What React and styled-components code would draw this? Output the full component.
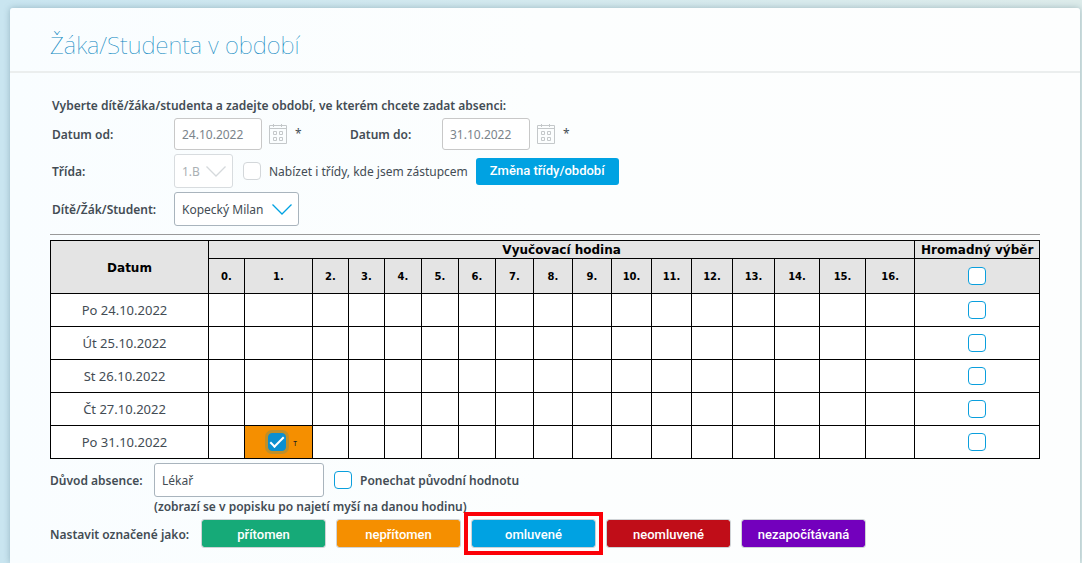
import React, { useState } from 'react';
import styled, { createGlobalStyle, css } from 'styled-components';

const textFont = "'Noto Sans', 'Open Sans', sans-serif";
const headFont = "'DejaVu Sans', Verdana, sans-serif";

const GlobalStyle = createGlobalStyle`
  *, *::before, *::after {
    box-sizing: border-box;
  }
  body {
    margin: 0;
    background: linear-gradient(90deg, #c9e5f0 0%, #d3e9ee 50%, #dcebea 100%);
    color: #434c54;
    font-family: ${textFont};
    font-size: 12px;
    line-height: 20px;
  }
  input, select, button {
    font: inherit;
    color: inherit;
  }
`;

const Page = styled.div`
  padding: 8px 2px 0 10px;
`;

const Card = styled.main`
  min-height: calc(100vh - 8px);
  border-radius: 3px 3px 0 0;
  background: linear-gradient(90deg, #f9fdff 0%, #fcfefe 50%, #fdfefe 100%);
  box-shadow: 0 0 6px rgba(70, 110, 125, 0.4);
`;

const CardHeader = styled.header`
  padding: 21px 40px 10px;
  border-bottom: 2px solid #ebeeee;
`;

const Title = styled.h1`
  margin: 0;
  color: #0a86c0;
  font-size: 24px;
  font-weight: 100;
  line-height: 32px;
`;

const Content = styled.div`
  padding: 22px 40px 12px;
`;

const Filter = styled.form`
  display: flex;
  flex-direction: column;
  gap: 4px;
  padding: 0 2px 8px;
  border-bottom: 1px solid #999;
  margin-bottom: 5px;
`;

const Intro = styled.p`
  margin: 0;
  padding-top: 2px;
  font-weight: 600;
  line-height: 17px;
`;

const Row = styled.div`
  display: flex;
  align-items: center;
`;

const Caption = styled.label`
  width: ${(props) => props.$width || 122}px;
  padding-top: 2px;
  font-weight: 600;
`;

const DateGroup = styled.div`
  display: flex;
  align-items: center;
  width: 298px;
`;

const TextInput = styled.input`
  width: ${(props) => props.$width || 88}px;
  height: ${(props) => props.$height || 32}px;
  padding: 0 7px;
  border: 1px solid ${(props) => (props.$muted ? '#c8c8c8' : '#a9b4bd')};
  border-radius: 3px;
  background: #fff;
  color: ${(props) => (props.$muted ? '#7b848b' : '#434c54')};
  outline: none;
`;

const IconButton = styled.button`
  display: flex;
  margin: 0 8px 0 7px;
  padding: 0;
  border: 0;
  background: none;
`;

const SelectBox = styled.div`
  display: grid;
  align-items: center;
  width: ${(props) => props.$width}px;
  height: 34px;
  border: 1px solid ${(props) => (props.$muted ? '#d8dcdf' : '#a9b4bd')};
  border-radius: 3px;
  background: #fff;
  color: ${(props) => (props.$muted ? '#aab0b4' : '#434c54')};

  select,
  svg {
    grid-area: 1 / 1;
  }
  select {
    appearance: none;
    width: 100%;
    height: 100%;
    padding: 2px 0 0 7px;
    border: 0;
    background: none;
    outline: none;
    opacity: 1;
  }
  svg {
    justify-self: end;
    margin-right: 5px;
    pointer-events: none;
    color: ${(props) => (props.$muted ? '#d5d9dc' : '#00a2e2')};
  }
`;

const checkMark = css`
  &::before {
    content: '';
    width: 14px;
    height: 7px;
    margin-top: -4px;
    border: solid #fff;
    border-width: 0 0 2px 2px;
    transform: rotate(-45deg);
  }
`;

const Check = styled.input.attrs({ type: 'checkbox' })`
  appearance: none;
  display: inline-grid;
  place-content: center;
  flex: none;
  width: 18px;
  height: 18px;
  margin: 0;
  border: 1px solid #0a9fdd;
  border-radius: 4px;
  background: #fff;
  vertical-align: middle;

  &:disabled {
    border-color: #d3d7da;
  }
  &:checked {
    border-color: #0a8fd0;
    background: #0a8fd0;
    ${checkMark}
  }
`;

const TableCheck = styled(Check)`
  display: grid;
  margin: 0 auto;
`;

const MarkCheck = styled(Check)`
  box-shadow: 0 0 0 3px rgba(110, 140, 100, 0.4);
`;

const CheckLabel = styled.label`
  display: flex;
  align-items: center;
  gap: 8px;
  margin: 0 8px 0 10px;
  font-weight: ${(props) => (props.$strong ? 600 : 400)};

  span {
    padding-top: 2px;
  }
`;

const Button = styled.button`
  height: 27px;
  padding: 0 14px;
  border: 0;
  border-radius: 3px;
  background: #00a2e2;
  color: #fff;
  font-family: Roboto, 'Liberation Sans', sans-serif;
  font-size: 13px;
  font-weight: 500;
`;

const StateButton = styled(Button)`
  width: 125px;
  height: 29px;
  padding: 2px 0 0;
  border: 1px solid #cfd3d6;
  background: ${(props) => props.$color};
  background-clip: padding-box;
`;

const StateSlot = styled.div`
  display: flex;
  ${(props) =>
    props.$highlighted &&
    css`
      outline: 4px solid #fb0007;
      outline-offset: 3px;
    `}
`;

const Table = styled.table`
  width: 100%;
  table-layout: fixed;
  border-collapse: collapse;
  background: #fff;

  th,
  td {
    padding: 0;
    border: 1px solid #000;
    text-align: center;
    vertical-align: middle;
  }
  thead th {
    background: #e4e4e4;
    color: #000;
    font-family: ${headFont};
    font-size: 12px;
    font-weight: bold;
    white-space: nowrap;
  }
  thead tr:first-child {
    height: 18px;
    line-height: 15px;
  }
  thead tr:first-child th {
    padding-top: 2px;
  }
  thead tr:last-child {
    height: 35px;
  }
  tbody tr {
    height: 33px;
  }
  tbody th {
    padding-right: 10px;
    font-size: 13px;
    font-weight: 400;
  }
  thead .hour {
    padding-top: 2px;
    font-size: 10px;
  }
`;

const MarkedCell = styled.td`
  background: #f58f00;
`;

const Mark = styled.div`
  display: flex;
  align-items: center;
  justify-content: center;
  gap: 7px;
  padding-left: 8px;
  color: #222;
  font-size: 8px;

  span {
    padding-top: 2px;
  }
`;

const Reason = styled.div`
  display: grid;
  grid-template-columns: 104px 1fr;
  align-items: center;
  padding-top: 4px;
`;

const ReasonCaption = styled.label`
  padding-top: 2px;
  font-weight: 600;
`;

const Hint = styled.div`
  grid-column: 2;
  padding-top: 2px;
  font-weight: 600;
  line-height: 16px;
`;

const Actions = styled.div`
  display: flex;
  align-items: center;
  gap: 10px;
  padding-top: 4px;
`;

const ActionsLabel = styled.span`
  width: 141px;
  padding-top: 2px;
  font-weight: 600;
  white-space: nowrap;
`;

const Chevron = () => (
  <svg width="22" height="14" viewBox="0 0 22 14" fill="none">
    <path d="M1.5 2.5 L11 12 L20.5 2.5" stroke="currentColor" strokeWidth="1.3" />
  </svg>
);

const CalendarIcon = () => (
  <svg width="18" height="20" viewBox="0 0 18 20" fill="none" stroke="#c4c8ca">
    <path d="M0.5 1.5 H17.5 V19.5 H0.5 Z M0.5 4.5 H17.5 M4.5 0 V3 M12.5 0 V3" />
    <path d="M4.5 7.5 h3 v3 h-3 Z M10.5 7.5 h3 v3 h-3 Z M4.5 13.5 h3 v3 h-3 Z M10.5 13.5 h3 v3 h-3 Z" />
  </svg>
);

const hourWidths = [
  36, 68, 36, 36, 37, 37, 37, 38, 39, 39, 40, 40, 41, 42, 45, 46, 49,
];

const days = [
  'Po 24.10.2022',
  'Út 25.10.2022',
  'St 26.10.2022',
  'Čt 27.10.2022',
  'Po 31.10.2022',
];

const states = [
  { name: 'přítomen', color: '#16aa78' },
  { name: 'nepřítomen', color: '#f58f00' },
  { name: 'omluvené', color: '#00a2e2', highlighted: true },
  { name: 'neomluvené', color: '#c00d18' },
  { name: 'nezapočítávaná', color: '#7300bd' },
];

const DateField = ({ id, label, value, labelWidth }) => (
  <>
    <Caption htmlFor={id} $width={labelWidth}>
      {label}
    </Caption>
    <TextInput id={id} defaultValue={value} $muted />
    <IconButton type="button" aria-label={label}>
      <CalendarIcon />
    </IconButton>
    <span>*</span>
  </>
);

const AbsenceTable = () => {
  const [marked, setMarked] = useState(true);
  return (
    <Table>
      <colgroup>
        <col style={{ width: 158 }} />
        {hourWidths.map((width, i) => (
          <col key={i} style={{ width }} />
        ))}
        <col style={{ width: 125 }} />
      </colgroup>
      <thead>
        <tr>
          <th rowSpan="2">Datum</th>
          <th colSpan={hourWidths.length}>Vyučovací hodina</th>
          <th>Hromadný výběr</th>
        </tr>
        <tr>
          {hourWidths.map((width, i) => (
            <th className="hour" key={i}>
              {i}.
            </th>
          ))}
          <th>
            <TableCheck aria-label="Vybrat vše" />
          </th>
        </tr>
      </thead>
      <tbody>
        {days.map((day, row) => (
          <tr key={day}>
            <th scope="row">{day}</th>
            {hourWidths.map((width, i) =>
              row === 4 && i === 1 ? (
                <MarkedCell key={i}>
                  <Mark>
                    <MarkCheck
                      aria-label={`${day}, ${i}. hodina`}
                      checked={marked}
                      onChange={() => setMarked(!marked)}
                    />
                    <span>т</span>
                  </Mark>
                </MarkedCell>
              ) : (
                <td key={i} />
              ),
            )}
            <td>
              <TableCheck aria-label={day} />
            </td>
          </tr>
        ))}
      </tbody>
    </Table>
  );
};

const App = () => {
  return (
    <>
      <GlobalStyle />
      <Page>
        <Card>
          <CardHeader>
            <Title>Žáka/Studenta v období</Title>
          </CardHeader>
          <Content>
            <Filter>
              <Intro>
                Vyberte dítě/žáka/studenta a zadejte období, ve kterém chcete
                zadat absenci:
              </Intro>
              <Row>
                <DateGroup>
                  <DateField id="from" label="Datum od:" value="24.10.2022" />
                </DateGroup>
                <DateGroup>
                  <DateField
                    id="to"
                    label="Datum do:"
                    value="31.10.2022"
                    labelWidth={92}
                  />
                </DateGroup>
              </Row>
              <Row>
                <Caption htmlFor="class">Třída:</Caption>
                <SelectBox $width={59} $muted>
                  <select id="class" disabled>
                    <option>1.B</option>
                  </select>
                  <Chevron />
                </SelectBox>
                <CheckLabel>
                  <Check disabled />
                  <span>Nabízet i třídy, kde jsem zástupcem</span>
                </CheckLabel>
                <Button type="button">Změna třídy/období</Button>
              </Row>
              <Row>
                <Caption htmlFor="student">Dítě/Žák/Student:</Caption>
                <SelectBox $width={125}>
                  <select id="student">
                    <option>Kopecký Milan</option>
                  </select>
                  <Chevron />
                </SelectBox>
              </Row>
            </Filter>
            <AbsenceTable />
            <Reason>
              <ReasonCaption htmlFor="reason">Důvod absence:</ReasonCaption>
              <Row>
                <TextInput
                  id="reason"
                  defaultValue="Lékař"
                  $width={170}
                  $height={34}
                />
                <CheckLabel $strong>
                  <Check />
                  <span>Ponechat původní hodnotu</span>
                </CheckLabel>
              </Row>
              <Hint>(zobrazí se v popisku po najetí myší na danou hodinu)</Hint>
            </Reason>
            <Actions>
              <ActionsLabel>Nastavit označené jako:</ActionsLabel>
              {states.map(({ name, color, highlighted }) => (
                <StateSlot key={name} $highlighted={highlighted}>
                  <StateButton type="button" $color={color}>
                    {name}
                  </StateButton>
                </StateSlot>
              ))}
            </Actions>
          </Content>
        </Card>
      </Page>
    </>
  );
};

export default App;
